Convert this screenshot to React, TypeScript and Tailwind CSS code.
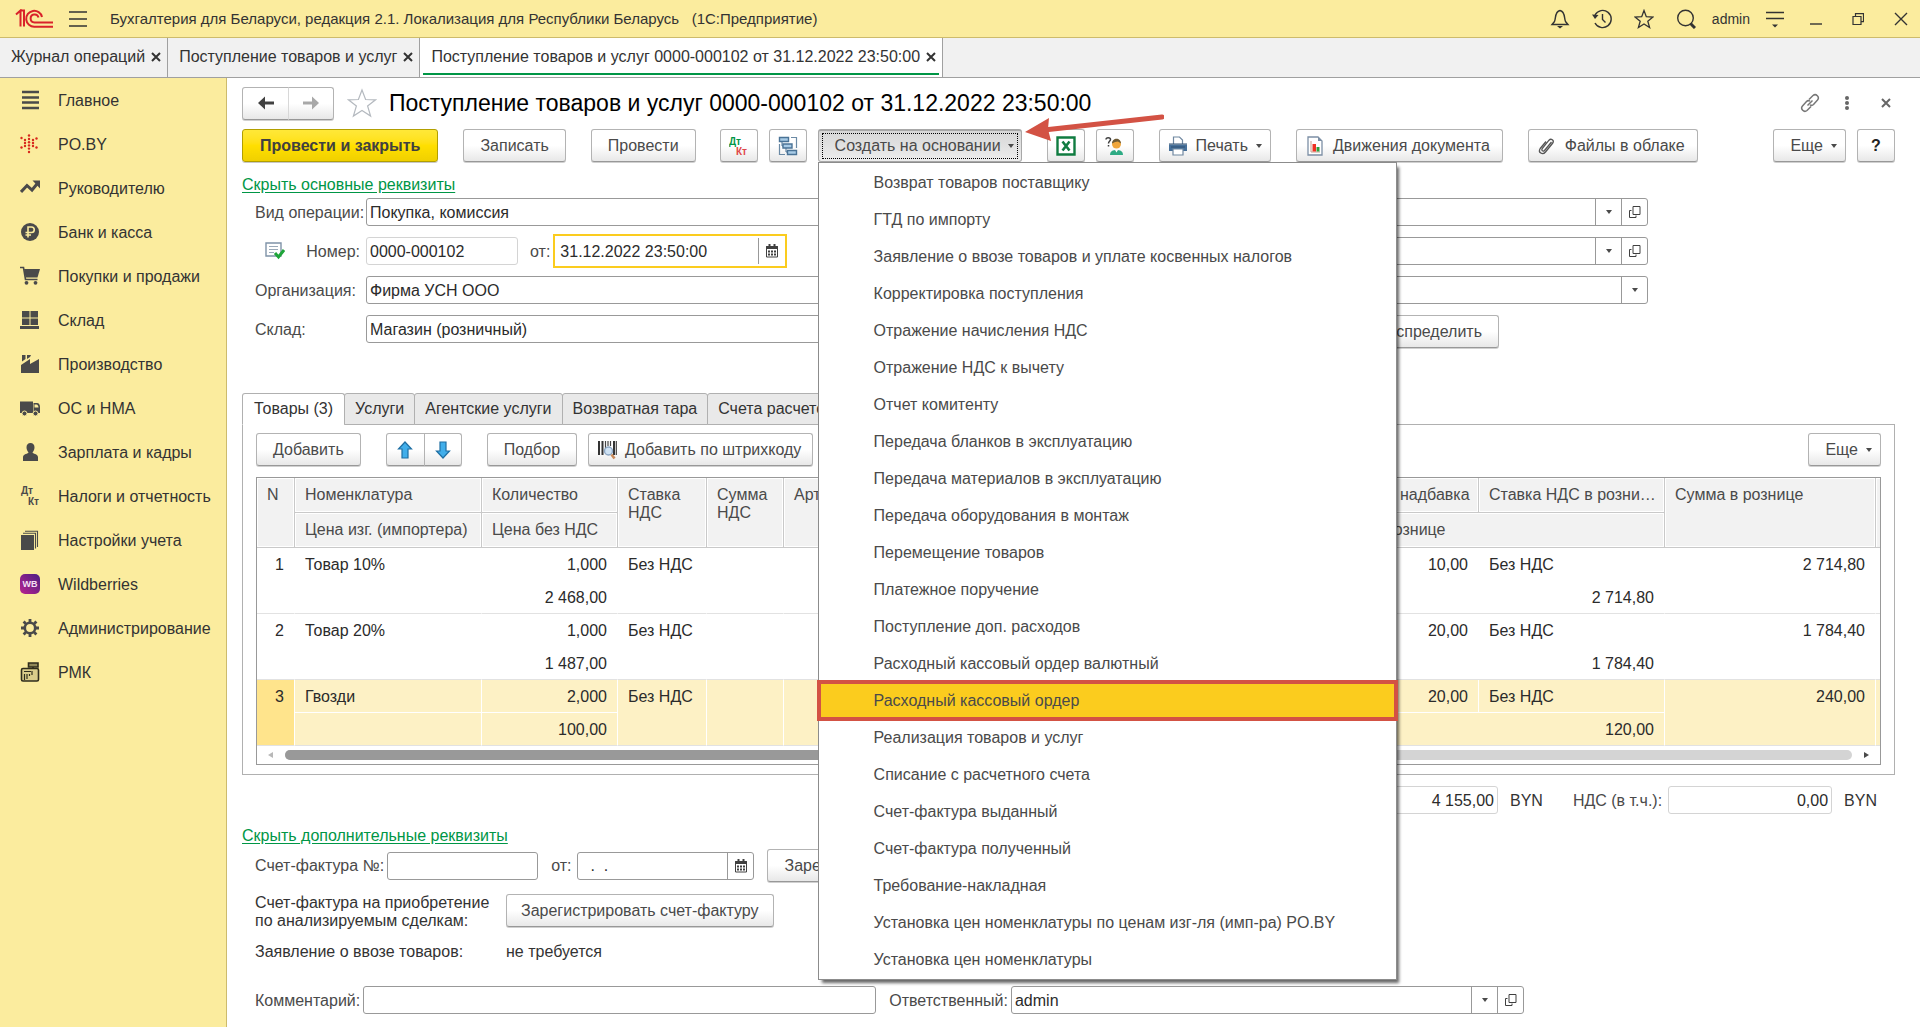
import React, { useState } from "react";
import clsx from "clsx";

const MENU_ITEMS = [
  "Возврат товаров поставщику",
  "ГТД по импорту",
  "Заявление о ввозе товаров и уплате косвенных налогов",
  "Корректировка поступления",
  "Отражение начисления НДС",
  "Отражение НДС к вычету",
  "Отчет комитенту",
  "Передача бланков в эксплуатацию",
  "Передача материалов в эксплуатацию",
  "Передача оборудования в монтаж",
  "Перемещение товаров",
  "Платежное поручение",
  "Поступление доп. расходов",
  "Расходный кассовый ордер валютный",
  "Расходный кассовый ордер",
  "Реализация товаров и услуг",
  "Списание с расчетного счета",
  "Счет-фактура выданный",
  "Счет-фактура полученный",
  "Требование-накладная",
  "Установка цен номенклатуры по ценам изг-ля (имп-ра) PO.BY",
  "Установка цен номенклатуры",
];

const ROWS = [
  { n: 1, name: "Товар 10%", qty: "1,000", price: "2 468,00", vat: "Без НДС", markup: "10,00", retail: "2 714,80", total: "2 714,80" },
  { n: 2, name: "Товар 20%", qty: "1,000", price: "1 487,00", vat: "Без НДС", markup: "20,00", retail: "1 784,40", total: "1 784,40" },
  { n: 3, name: "Гвозди", qty: "2,000", price: "100,00", vat: "Без НДС", markup: "20,00", retail: "120,00", total: "240,00" },
];

const OPEN_WINDOWS = [
  "Журнал операций",
  "Поступление товаров и услуг",
  "Поступление товаров и услуг 0000-000102 от 31.12.2022 23:50:00",
];

const DOC_TABS = ["Товары (3)", "Услуги", "Агентские услуги", "Возвратная тара", "Счета расчетов"];

/* ---------- icons ---------- */

const Svg: React.FC<{ size?: number; className?: string; children: React.ReactNode }> = ({
  size = 20,
  className,
  children,
}) => (
  <svg width={size} height={size} viewBox={`0 0 ${size} ${size}`} fill="none" className={clsx("shrink-0", className)} aria-hidden="true">
    {children}
  </svg>
);

const DARK = "#4a4a4a";

const DotsStar = () => (
  <Svg>
    {[
      [9, 1.5], [9, 5], [9, 8.2], [9, 11.4], [9, 14.600], [9, 18],
      [1.5, 4], [1.5, 13.5], [16.5, 4.500], [16.5, 13.5],
      [5, 6], [5, 9], [5, 12], [13, 6], [13, 9], [13, 12],
    ].map(([x, y]) => (
      <circle key={`${x}-${y}`} cx={x} cy={y} r="1.2" fill="#d8281c" />
    ))}
  </Svg>
);

const NAV_ITEMS: { label: string; icon: React.ReactNode }[] = [
  {
    label: "Главное",
    icon: <Svg><path d="M2 2h17M2 7.500h17M2 12.500h17M2 18h17" stroke={DARK} strokeWidth="2.600" /></Svg>,
  },
  { label: "PO.BY", icon: <DotsStar /> },
  {
    label: "Руководителю",
    icon: (
      <Svg>
        <path d="M1 14l6-6.500 5 4.500 5-6" stroke={DARK} strokeWidth="3" />
        <path d="M12.500 2.500H20v8z" fill={DARK} />
      </Svg>
    ),
  },
  {
    label: "Банк и касса",
    icon: (
      <Svg>
        <circle cx="10" cy="10" r="9" fill={DARK} />
        <path d="M8 15.500V5h3.500a2.700 2.700 0 0 1 0 5.500H5.500M5.500 13h5.500" stroke="#fbec9e" strokeWidth="1.600" />
      </Svg>
    ),
  },
  {
    label: "Покупки и продажи",
    icon: (
      <Svg>
        <path d="M0 1.500h3.500l2 12h12" stroke={DARK} strokeWidth="1.600" />
        <path d="M4 3h16l-2.500 8.500H5.500z" fill={DARK} />
        <circle cx="6.500" cy="16.800" r="1.900" fill={DARK} />
        <circle cx="15.500" cy="16.800" r="1.900" fill={DARK} />
      </Svg>
    ),
  },
  {
    label: "Склад",
    icon: (
      <Svg>
        <path d="M2 1h7.500v6.500H2zM10.500 1H18v6.500h-7.500zM2 8.500h7.500V15H2zM10.500 8.500H18V15h-7.500zM0 16h19v3H0z" fill={DARK} />
      </Svg>
    ),
  },
  {
    label: "Производство",
    icon: (
      <Svg>
        <path d="M1 19v-8l9-6v5l9-5v14z" fill={DARK} />
        <path d="M2 1h3.500v4L2 7.500zM7 1h4l-1 2-3 2z" fill={DARK} />
      </Svg>
    ),
  },
  {
    label: "ОС и НМА",
    icon: (
      <Svg>
        <path d="M0 3.500h13V15H0zM13.500 5h3.500c2 0 3 2 3 4v6h-6.500z" fill={DARK} />
        <path d="M14.500 6.500h2c1 0 2 1.500 2 3h-4z" fill="#fbec9e" />
        <circle cx="4.500" cy="15.500" r="2.500" fill={DARK} stroke="#fbec9e" />
        <circle cx="15.500" cy="15.500" r="2.500" fill={DARK} stroke="#fbec9e" />
      </Svg>
    ),
  },
  {
    label: "Зарплата и кадры",
    icon: (
      <Svg>
        <path d="M10.500 1c2.500 0 4 1.800 4 4.300 0 2.400-1 4.200-2 5 0 1.700 5.500 1.500 5.500 5V19H3v-3.700c0-3.500 5.500-3.300 5.500-5-1-.8-2-2.600-2-5C6.500 2.800 8 1 10.500 1z" fill={DARK} />
      </Svg>
    ),
  },
  {
    label: "Налоги и отчетность",
    icon: (
      <Svg>
        <text x="1" y="8" fontSize="10" fontWeight="700" fontFamily="Liberation Sans, sans-serif" fill={DARK}>Дт</text>
        <text x="8" y="19" fontSize="10" fontWeight="700" fontFamily="Liberation Sans, sans-serif" fill={DARK}>Кт</text>
      </Svg>
    ),
  },
  {
    label: "Настройки учета",
    icon: (
      <Svg>
        <path d="M1 5h13v15H1z" fill={DARK} />
        <path d="M3 3.200h12.500V18.500M5 1.200h12.500V17" stroke={DARK} strokeWidth="1.100" />
      </Svg>
    ),
  },
  {
    label: "Wildberries",
    icon: (
      <Svg>
        <defs>
          <linearGradient id="wb" x1="0" y1="1" x2="1" y2="0">
            <stop offset="0" stopColor="#b8238f" />
            <stop offset="1" stopColor="#4b1f84" />
          </linearGradient>
        </defs>
        <rect width="20" height="20" rx="5" fill="url(#wb)" />
        <text x="10" y="13" fontSize="9" fontWeight="700" textAnchor="middle" fontFamily="Liberation Sans, sans-serif" fill="#f3dff2">WB</text>
      </Svg>
    ),
  },
  {
    label: "Администрирование",
    icon: (
      <Svg>
        <circle cx="10" cy="10" r="5.200" stroke={DARK} strokeWidth="2.600" />
        <path d="M10 1v3.500M10 15.500V19M1 10h3.500M15.500 10H19M3.600 3.600l2.400 2.400M14 14l2.400 2.400M3.600 16.400L6 14M14 6l2.400-2.400" stroke={DARK} strokeWidth="2.800" />
      </Svg>
    ),
  },
  {
    label: "РМК",
    icon: (
      <Svg>
        <path d="M8.500 1H18v4H8.500zM13 5v2" fill="#8f8758" stroke="#2f2d1c" strokeWidth="1.600" />
        <rect x="1.500" y="6.500" width="17" height="12.500" rx="1.500" fill="#d9cc8a" stroke="#2f2d1c" strokeWidth="1.600" />
        <path d="M4 9.500h7M4.500 12v6M7 12v5M9.500 12v2M12 9v4" stroke="#2f2d1c" strokeWidth="1.200" />
      </Svg>
    ),
  },
];

const CalendarIcon = () => (
  <Svg size={14}>
    <path d="M1.500 2.500h11V13h-11z" stroke="#404040" />
    <path d="M1.500 2.500h11v2h-11z" fill="#404040" stroke="#404040" />
    <path d="M4.500 0v3M9.500 0v3" stroke="#404040" strokeWidth="2" />
    <path d="M3 7.500h8M3 10.500h8" stroke="#404040" strokeWidth="2" strokeDasharray="2 1" />
  </Svg>
);

const OpenIcon = () => (
  <Svg size={14}>
    <path d="M5 1.500h7v8H5zM3.500 5.500h-2v7h6.500v-2" stroke="#404040" />
  </Svg>
);

const Caret = () => (
  <svg width="6" height="4" viewBox="0 0 6 4" className="shrink-0" aria-hidden="true">
    <path d="M0 0h6L3 4z" fill="#4a4a4a" />
  </svg>
);

const CrossIcon = ({ size = 10 }: { size?: number }) => (
  <svg width={size} height={size} viewBox="0 0 10 10" aria-hidden="true">
    <path d="M1 1l8 8M9 1L1 9" stroke="currentColor" strokeWidth="2" />
  </svg>
);

/* ---------- controls ---------- */

type BtnProps = React.ButtonHTMLAttributes<HTMLButtonElement>;

const Btn: React.FC<BtnProps> = ({ className, children, ...rest }) => (
  <button
    type="button"
    className={clsx(
      "flex h-[33px] shrink-0 items-center justify-center whitespace-nowrap rounded-[3px] border border-[#b3b3b3] border-b-[#989898] bg-linear-to-b from-white from-50% to-[#e8e8e8] shadow-[0_1px_0_#d0d0d0]",
      className
    )}
    {...rest}
  >
    {children}
  </button>
);

const MoreBtn = () => (
  <Btn className="gap-2 pl-4 pr-2">
    Еще <Caret />
  </Btn>
);

interface FieldProps {
  id?: string;
  label?: string;
  value?: string;
  pale?: boolean;
  right?: boolean;
  actions?: ("drop" | "open" | "date")[];
  className?: string;
}

const ACTION_LABELS = { drop: "Выбрать из списка", open: "Открыть", date: "Календарь" };

const Field: React.FC<FieldProps> = ({ id, label, value = "", pale, right, actions = [], className }) => (
  <div
    className={clsx(
      "flex h-7 overflow-hidden rounded-[3px] border bg-white",
      pale ? "border-[#d4d4d4]" : "border-[#999]",
      className
    )}
  >
    <input
      id={id}
      aria-label={label}
      defaultValue={value}
      className={clsx("w-full min-w-0 flex-1 bg-transparent px-[3px] pt-px text-[#2b2b2b] outline-none", right && "text-right")}
    />
    {actions.map((a) => (
      <button key={a} type="button" aria-label={ACTION_LABELS[a]} className="flex w-[26px] shrink-0 items-center justify-center border-l border-[#999]">
        {a === "drop" && <Caret />}
        {a === "open" && <OpenIcon />}
        {a === "date" && <CalendarIcon />}
      </button>
    ))}
  </div>
);

/* ---------- page parts ---------- */

const TitleBar = () => (
  <header className="flex h-[38px] items-center border-b border-[#cdbb6c] bg-[#fbec9e] pl-[15px] pr-3 text-[#333]">
    <svg width="38" height="20" viewBox="0 0 38 20" fill="none" aria-hidden="true">
      <path d="M1 5.500L5.500 1.500V17.500M9 17.500V1.500H5.500" stroke="#d9222a" strokeWidth="2" />
      <path d="M27 8a8 8 0 1 0-7.500 9.800H38" stroke="#d9222a" strokeWidth="2" />
      <path d="M23.500 8.500a4 4 0 1 0-4 5H38" stroke="#d9222a" strokeWidth="2" />
    </svg>
    <button type="button" aria-label="Меню" className="ml-4">
      <Svg size={18}><path d="M0 2h18M0 9h18M0 16h18" stroke="#333" strokeWidth="1.600" /></Svg>
    </button>
    <div className="ml-[23px] whitespace-pre text-[15px]">
      Бухгалтерия для Беларуси, редакция 2.1. Локализация для Республики Беларусь   (1С:Предприятие)
    </div>
    <div className="ml-auto flex items-center">
      <button type="button" aria-label="Уведомления" className="mr-[22px]">
        <Svg><path d="M10 1.500c-5.500 1-4 8-5.500 11L2 15.500h16l-2.500-3c-1.500-3 0-10-5.500-11z" stroke="#333" strokeWidth="1.400" /><path d="M7 17h6l-3 2.500z" fill="#333" /></Svg>
      </button>
      <button type="button" aria-label="История" className="mr-[22px]">
        <Svg><path d="M3 6a8.600 8.600 0 1 1 0 8M10.500 5v5.500l3 3" stroke="#333" strokeWidth="1.400" /><path d="M0 5.500l6.500.5-3.500 4z" fill="#333" /></Svg>
      </button>
      <button type="button" aria-label="Избранное" className="mr-[22px]">
        <Svg><path d="M10 1.500l2.300 6.200 6.700.3-5.200 4.200 1.800 6.300L10 15l-5.600 3.500 1.800-6.300L1 8l6.700-.3z" stroke="#333" strokeWidth="1.300" /></Svg>
      </button>
      <button type="button" aria-label="Поиск" className="mr-4">
        <Svg><circle cx="9.500" cy="9" r="7.800" stroke="#333" strokeWidth="1.400" /><path d="M14.500 14.500l4.500 4.500" stroke="#333" strokeWidth="3" /></Svg>
      </button>
      <span className="mr-4 text-sm">admin</span>
      <button type="button" aria-label="Настройки" className="mr-[26px]">
        <Svg size={18}><path d="M0 2.500h18M0 8.500h18" stroke="#333" strokeWidth="1.300" /><path d="M6 14.500h6l-3 3z" fill="#333" /></Svg>
      </button>
      <button type="button" aria-label="Свернуть" className="mr-[30px]">
        <Svg size={12}><path d="M0 11h12" stroke="#333" strokeWidth="1.400" /></Svg>
      </button>
      <button type="button" aria-label="Восстановить" className="mr-[30px]">
        <Svg size={12}><path d="M1 3.500h8v8H1zM3.500 3V.7h8v8H9.500" stroke="#333" strokeWidth="1.200" /></Svg>
      </button>
      <button type="button" aria-label="Закрыть программу">
        <Svg size={14}><path d="M1 1l12 12M13 1L1 13" stroke="#333" strokeWidth="1.400" /></Svg>
      </button>
    </div>
  </header>
);

const WindowTabs = () => (
  <nav className="flex h-10 border-b border-[#a0a0a0] bg-[#f1f1f1] text-[#333]">
    {OPEN_WINDOWS.map((title, i) => {
      const active = i === OPEN_WINDOWS.length - 1;
      return (
        <div key={title} className={clsx("flex flex-col border-r border-[#a0a0a0] px-[3px]", active && "bg-white")}>
          <div className="flex flex-1 items-center gap-[6px] pl-2 pr-[3px]">
            <a href="#" className="whitespace-nowrap">{title}</a>
            <button type="button" aria-label="Закрыть вкладку"><CrossIcon /></button>
          </div>
          <div className={clsx("-mt-[3px] mb-[2px] h-[2px]", active && "bg-[#009646]")} />
        </div>
      );
    })}
  </nav>
);

const Sidebar = () => (
  <aside className="w-[227px] shrink-0 border-r border-[#cdbb6c] bg-[#fbec9e]">
    {NAV_ITEMS.map((item) => (
      <a key={item.label} href="#" className="flex h-11 items-center gap-[18px] pl-5 text-[#333]">
        {item.icon}
        <span className="whitespace-nowrap pt-[2px]">{item.label}</span>
      </a>
    ))}
  </aside>
);

const CreateMenu = () => {
  const [open, setOpen] = useState(true);
  return (
    <div className="relative shrink-0">
      <button
        type="button"
        onClick={() => setOpen(!open)}
        className="flex h-[33px] items-center rounded-[3px] border border-t-2 border-[#a8a8a8] bg-linear-to-b from-[#d6d6d6] to-[#ededed] px-[3px]"
      >
        <span className="flex h-[26px] items-center gap-[7px] whitespace-nowrap border border-dotted border-black pl-3 pr-[3px]">
          Создать на основании <Caret />
        </span>
      </button>
      {open && (
        <div className="absolute left-0 top-full z-20 w-[579px] border border-[#8c8c8c] bg-white py-px shadow-[3px_4px_3px_-1px_rgba(0,0,0,0.6)]">
          {MENU_ITEMS.map((item) => {
            const marked = item === "Расходный кассовый ордер";
            return (
              <button
                key={item}
                type="button"
                className={clsx(
                  "flex h-[37px] w-full items-center whitespace-nowrap pl-[55px]",
                  marked && "bg-[#fbcc1e] outline-4 -outline-offset-2 outline-[#d35244]"
                )}
              >
                {item}
              </button>
            );
          })}
        </div>
      )}
      <svg width="140" height="34" viewBox="0 0 140 34" className="absolute -top-4 left-full z-30 ml-[2px]" aria-hidden="true">
        <path d="M138 4L20 17" stroke="#d35244" strokeWidth="5" strokeLinecap="round" />
        <path d="M1 19L25 5l-1 11 3 12z" fill="#d35244" />
      </svg>
    </div>
  );
};

const CommandBar = () => (
  <div className="mt-[11px] flex items-center text-[#4a4a4a]">
    <button
      type="button"
      className="flex h-[33px] shrink-0 items-center whitespace-nowrap rounded-[3px] border border-[#b29f00] bg-linear-to-b from-[#ffe838] via-[#ffdf00] to-[#f0d000] px-[17px] font-bold text-[#404040] shadow-[0_1px_0_#c8c8c8]"
    >
      Провести и закрыть
    </button>
    <Btn className="ml-[25px] px-4">Записать</Btn>
    <Btn className="ml-[25px] px-4">Провести</Btn>
    <Btn className="ml-6 w-[38px]" aria-label="Проводки">
      <Svg>
        <text x="0" y="9" fontSize="10" fontWeight="700" fontFamily="Liberation Sans, sans-serif" fill="#009646">Дт</text>
        <text x="7" y="19" fontSize="10" fontWeight="700" fontFamily="Liberation Sans, sans-serif" fill="#e04848">Кт</text>
      </Svg>
    </Btn>
    <Btn className="ml-[11px] w-[38px]" aria-label="Структура подчиненности">
      <Svg>
        <path d="M13 1.500h5.500V12M7 18.500H1.500V8" stroke="#6b8aa5" strokeWidth="1.200" />
        <path d="M1.500 1.500h9v4h-9zM5 8h9v4H5zM9.500 14.500h9v4h-9z" fill="#a8cbe6" stroke="#4a7396" strokeWidth="1.400" />
        <path d="M4 6v4h1M8 12v4h1.500" stroke="#4a7396" />
      </Svg>
    </Btn>
    <div className="ml-[11px]">
      <CreateMenu />
    </div>
    <Btn className="ml-[25px] w-[38px]" aria-label="Excel">
      <Svg>
        <path d="M1.500 1.500h17v17h-17z" fill="#fff" stroke="#107c41" strokeWidth="2.400" />
        <path d="M6.500 5.500l7 9M13.500 5.500l-7 9" stroke="#107c41" strokeWidth="2.600" />
      </Svg>
    </Btn>
    <Btn className="ml-[11px] w-[38px]" aria-label="Вопрос специалисту">
      <Svg>
        <path d="M1 3.500C1 1 5.500 1 5.500 3.500 5.500 5 3.500 5 3.500 7.500M3.500 9v1.600" stroke="#404040" strokeWidth="1.500" />
        <path d="M5 19c0-4 3-5 6.500-5s6.500 1 6.500 5z" fill="#2eab84" />
        <circle cx="11.500" cy="8" r="4.500" fill="#f0a63c" />
        <path d="M7 7.500C7 1 16 1 16 7.500l-3-2-3 .5z" fill="#6d5a35" />
        <path d="M10 14h3l-1.500 2.500z" fill="#fff" />
      </Svg>
    </Btn>
    <Btn className="ml-[25px] gap-2 pl-2 pr-2">
      <Svg>
        <path d="M5.500 8V1h6l3 3v4" fill="#fff" stroke="#6f87a0" strokeWidth="1.200" />
        <path d="M1 8.500h18v6.500H1z" fill="#46709a" />
        <path d="M1 8h18M3 11h14" stroke="#2f4f70" strokeWidth="1.200" />
        <path d="M5 13h10v6H5z" fill="#fff" stroke="#6f87a0" strokeWidth="1.200" />
      </Svg>
      Печать <Caret />
    </Btn>
    <Btn className="ml-[25px] gap-2 pl-2 pr-3">
      <Svg>
        <path d="M3 1h10l4 4v14H3z" fill="#fff" stroke="#7c8fa5" strokeWidth="1.300" />
        <path d="M13 1v4h4z" fill="#7c8fa5" />
        <path d="M6 5v11h9" stroke="#c4a090" />
        <path d="M7.500 8H11v7.500H7.500z" fill="#ee3324" />
        <path d="M11.500 11h3v4.500h-3z" fill="#2e9e3c" />
      </Svg>
      Движения документа
    </Btn>
    <Btn className="ml-[25px] gap-2 pl-2 pr-3">
      <Svg>
        <path d="M14.500 6l-7 8.500c-1.500 1.500-3.500 0-2.300-1.800l6.800-8.500c2-2.200 5.500 0 3.800 2.800L8.500 16c-3 3.500-7.800.5-5.300-3.500L9 5.500" stroke="#555" strokeWidth="1.300" />
      </Svg>
      Файлы в облаке
    </Btn>
    <div className="ml-auto flex gap-[11px]">
      <MoreBtn />
      <Btn className="w-[38px] font-bold text-[#222]">?</Btn>
    </div>
  </div>
);

const MainFields = () => (
  <div className="mt-[3px] grid grid-cols-2 gap-x-[25px] pl-[13px] pr-[247px] text-[#4a4a4a]">
    <div className="flex flex-col gap-[11px]">
      <div className="flex items-center">
        <label htmlFor="operation" className="w-[111px] shrink-0 pt-px">Вид операции:</label>
        <Field id="operation" value="Покупка, комиссия" actions={["drop"]} className="flex-1" />
      </div>
      <div className="flex h-7 items-center">
        <Svg className="ml-[10px]">
          <path d="M1 2h15v13H1z" fill="#fff" stroke="#7f93a8" strokeWidth="1.400" />
          <path d="M4 5.500h9M4 8.500h9M4 11.500h5" stroke="#9aa9b8" />
          <path d="M10 12l3.500 4L19 9" stroke="#1fa53a" strokeWidth="3" />
        </Svg>
        <label htmlFor="number" className="ml-auto mr-[6px] pt-px">Номер:</label>
        <div className="flex w-[calc(100%-111px)] items-center">
          <Field id="number" value="0000-000102" pale className="w-[152px]" />
          <label htmlFor="date" className="ml-3 mr-[3px] pt-px">от:</label>
          <div className="flex h-[34px] w-[234px] border-2 border-[#fbcc1e] py-[2px]">
            <input id="date" defaultValue="31.12.2022 23:50:00" className="min-w-0 flex-1 pl-[5px] pt-px text-[#2b2b2b] outline-none" />
            <button type="button" aria-label="Календарь" className="flex w-[27px] items-center justify-center border-l border-[#999]">
              <CalendarIcon />
            </button>
          </div>
        </div>
      </div>
      <div className="flex items-center">
        <label htmlFor="company" className="w-[111px] shrink-0 pt-px">Организация:</label>
        <Field id="company" value="Фирма УСН ООО" actions={["drop", "open"]} className="flex-1" />
      </div>
      <div className="flex items-center">
        <label htmlFor="store" className="w-[111px] shrink-0 pt-px">Склад:</label>
        <Field id="store" value="Магазин (розничный)" actions={["drop", "open"]} className="flex-1" />
      </div>
    </div>
    <div className="flex flex-col gap-[11px]">
      <Field label="Контрагент" actions={["drop", "open"]} />
      <Field label="Договор" actions={["drop", "open"]} />
      <Field label="Зачет аванса" actions={["drop"]} />
      <Btn className="mr-[149px] self-end px-4">Распределить</Btn>
    </div>
  </div>
);

const Th: React.FC<React.ThHTMLAttributes<HTMLTableCellElement>> = ({ className, ...rest }) => (
  <th
    className={clsx(
      "h-[35px] overflow-hidden border-b border-r border-[#c9c9c9] bg-[#f2f2f2] pl-[10px] pt-2 text-left align-top font-normal leading-[18px] text-[#4a4a4a] shadow-[inset_0_0_0_1px_#fff]",
      className
    )}
    {...rest}
  />
);

const GoodsTable = () => (
  <div className="mt-[11px] border border-[#999]">
    <table className="w-full table-fixed border-separate border-spacing-0">
      <colgroup>
        <col className="w-[38px]" />
        <col className="w-[187px]" />
        <col className="w-[136px]" />
        <col className="w-[89px]" />
        <col className="w-[77px]" />
        <col />
        <col className="w-[160px]" />
        <col className="w-[186px]" />
        <col className="w-[211px]" />
        <col className="w-[4px]" />
      </colgroup>
      <thead>
        <tr>
          <Th rowSpan={2}>N</Th>
          <Th>Номенклатура</Th>
          <Th>Количество</Th>
          <Th rowSpan={2}>Ставка НДС</Th>
          <Th rowSpan={2}>Сумма НДС</Th>
          <Th rowSpan={2}>Артикул</Th>
          <Th className="whitespace-nowrap">Торговая надбавка</Th>
          <Th className="text-ellipsis whitespace-nowrap pr-1">Ставка НДС в розничной цене</Th>
          <Th rowSpan={2}>Сумма в рознице</Th>
          <th rowSpan={2} className="border-b border-[#c9c9c9] bg-[#f2f2f2] shadow-[inset_1px_1px_0_#fff]" />
        </tr>
        <tr>
          <Th>Цена изг. (импортера)</Th>
          <Th>Цена без НДС</Th>
          <Th colSpan={2}>Цена в рознице</Th>
        </tr>
      </thead>
      {ROWS.map((r) => {
        const selected = r.n === 3;
        const base = "h-[33px] whitespace-nowrap px-[10px] pt-2 align-top leading-[18px] border-r";
        const inner = clsx(base, selected ? "border-b border-white bg-[#fdf1c5]" : "border-transparent");
        const edge = clsx(base, "border-b border-b-[#e2e2e2]", selected ? "border-r-white" : "border-r-transparent");
        const last = clsx(edge, selected && "bg-[#fdf1c5]");
        return (
          <tbody key={r.n} className="text-[#2b2b2b]">
            <tr>
              <td rowSpan={2} className={clsx(edge, "text-right", selected && "bg-[#ffe48c]")}>{r.n}</td>
              <td className={inner}>{r.name}</td>
              <td className={clsx(inner, "text-right")}>{r.qty}</td>
              <td rowSpan={2} className={last}>{r.vat}</td>
              <td rowSpan={2} className={last} />
              <td rowSpan={2} className={last} />
              <td className={clsx(inner, "text-right")}>{r.markup}</td>
              <td className={inner}>{r.vat}</td>
              <td rowSpan={2} className={clsx(last, "text-right")}>{r.total}</td>
              <td rowSpan={2} className={clsx("border-b border-[#e2e2e2]", selected && "bg-[#fdf1c5]")} />
            </tr>
            <tr>
              <td className={last} />
              <td className={clsx(last, "text-right")}>{r.price}</td>
              <td colSpan={2} className={clsx(last, "text-right")}>{r.retail}</td>
            </tr>
          </tbody>
        );
      })}
    </table>
    <div className="flex h-[18px] items-center px-[11px]">
      <svg width="5" height="6" viewBox="0 0 5 6" aria-hidden="true"><path d="M5 0v6L0 3z" fill="#b8b8b8" /></svg>
      <div className="mx-3 h-[10px] flex-1 rounded-full bg-[#d4d4d4]">
        <div className="h-full w-3/5 rounded-full bg-[#999]" />
      </div>
      <svg width="5" height="6" viewBox="0 0 5 6" aria-hidden="true"><path d="M0 0v6l5-3z" fill="#4a4a4a" /></svg>
    </div>
  </div>
);

const DocumentTabs = () => (
  <section className="mt-[45px]">
    <div className="relative flex" role="tablist">
      {DOC_TABS.map((t, i) => (
        <button
          key={t}
          type="button"
          role="tab"
          aria-selected={i === 0}
          className={clsx(
            "h-8 whitespace-nowrap rounded-t-[3px] border border-[#b0b0b0] text-[#333]",
            i === 0 ? "border-b-white bg-white px-[11px]" : "-ml-px bg-[#e9e9e9] px-[10px]"
          )}
        >
          {t}
        </button>
      ))}
    </div>
    <div className="-mt-px border border-[#b0b0b0] px-[13px] pb-[9px] pt-2">
      <div className="flex items-center text-[#4a4a4a]">
        <Btn className="px-4">Добавить</Btn>
        <div className="ml-[25px] flex">
          <Btn className="w-[39px] rounded-r-none" aria-label="Переместить вверх">
            <Svg><path d="M10 2l6.500 7H13v9H7V9H3.500z" fill="#41aeea" stroke="#1f6fa3" strokeWidth="1.200" /></Svg>
          </Btn>
          <Btn className="-ml-px w-[38px] rounded-l-none" aria-label="Переместить вниз">
            <Svg><path d="M10 18l6.500-7H13V2H7v9H3.500z" fill="#41aeea" stroke="#1f6fa3" strokeWidth="1.200" /></Svg>
          </Btn>
        </div>
        <Btn className="ml-[25px] px-4">Подбор</Btn>
        <Btn className="ml-[11px] gap-2 pl-2 pr-[11px]">
          <Svg>
            <path d="M2 1v14M5.500 1v14M17 1v14" stroke="#333" strokeWidth="2" />
            <path d="M8.500 1v9M11 1v5M13.500 1v5M19.300 1v14" stroke="#444" strokeWidth="1.200" />
            <circle cx="11.500" cy="11" r="4" fill="#cfe3f5" stroke="#8da7c4" strokeWidth="1.400" />
            <path d="M14.500 14.500l3 4" stroke="#c98b5c" strokeWidth="2.600" />
          </Svg>
          Добавить по штрихкоду
        </Btn>
        <div className="ml-auto"><MoreBtn /></div>
      </div>
      <GoodsTable />
    </div>
  </section>
);

const Totals = () => (
  <div className="mt-[11px] flex items-center justify-end pr-[18px] text-[#333]">
    <Field label="Всего" value="4 155,00" pale right className="w-[164px]" />
    <span className="ml-3 pt-px">BYN</span>
    <label htmlFor="vat" className="ml-[30px] mr-[6px] pt-px text-[#4a4a4a]">НДС (в т.ч.):</label>
    <Field id="vat" value="0,00" pale right className="w-[164px]" />
    <span className="ml-3 pt-px">BYN</span>
  </div>
);

const Footer = () => (
  <div className="pl-[13px] text-[#4a4a4a]">
    <div className="mt-[3px] flex items-center">
      <label htmlFor="invoice" className="mr-[3px] pt-px">Счет-фактура №:</label>
      <Field id="invoice" className="w-[151px]" />
      <label htmlFor="invoiceDate" className="ml-[13px] mr-[6px] pt-px">от:</label>
      <Field id="invoiceDate" value="  .  ." actions={["date"]} className="w-[177px]" />
      <Btn className="ml-[13px] px-4">Зарегистрировать</Btn>
    </div>
    <div className="mt-3 grid grid-cols-[251px_1fr] items-start gap-y-3 text-[#333]">
      <div className="leading-[18px]">
        Счет-фактура на приобретение<br />по анализируемым сделкам:
      </div>
      <div className="flex text-[#4a4a4a]">
        <Btn className="px-[14px]">Зарегистрировать счет-фактуру</Btn>
      </div>
      <div className="leading-5">Заявление о ввозе товаров:</div>
      <div className="leading-5">не требуется</div>
    </div>
    <div className="mt-6 flex items-center pr-[371px]">
      <label htmlFor="comment" className="mr-[3px] pt-px">Комментарий:</label>
      <Field id="comment" className="flex-1" />
      <label htmlFor="owner" className="ml-[13px] mr-[3px] pt-px">Ответственный:</label>
      <Field id="owner" value="admin" actions={["drop", "open"]} className="flex-1" />
    </div>
  </div>
);

const App: React.FC = () => (
  <div className="flex min-h-screen flex-col bg-white font-['Liberation_Sans',Arial,sans-serif] text-base leading-5">
    <TitleBar />
    <WindowTabs />
    <div className="flex flex-1">
      <Sidebar />
      <main className="min-w-0 flex-1 pb-3 pl-[15px] pr-[25px] pt-[10px]">
        <div className="flex h-[30px] items-center">
          <div className="flex">
            <Btn className="h-[30px] w-[47px] rounded-r-none" aria-label="Назад">
              <Svg size={18}><path d="M17 9H5" stroke="#404040" strokeWidth="3" /><path d="M8 2.500L1 9l7 6.500z" fill="#404040" /></Svg>
            </Btn>
            <Btn className="-ml-px h-[30px] w-[46px] rounded-l-none border-l-[#d8d8d8]" aria-label="Вперед">
              <Svg size={18}><path d="M1 9h12" stroke="#a8a8a8" strokeWidth="3" /><path d="M10 2.500L17 9l-7 6.500z" fill="#a8a8a8" /></Svg>
            </Btn>
          </div>
          <button type="button" aria-label="Добавить в избранное" className="ml-[13px]">
            <Svg size={30}><path d="M15 2l3.600 9.500 10 .3-8 6.200 3 10L15 22.500 6.400 28l3-10-8-6.200 10-.3z" stroke="#b4b9bf" strokeWidth="1.200" /></Svg>
          </button>
          <h1 className="ml-3 whitespace-nowrap text-[23px] leading-7 text-black">
            Поступление товаров и услуг 0000-000102 от 31.12.2022 23:50:00
          </h1>
          <div className="ml-auto flex items-center pr-1 text-[#666]">
            <button type="button" aria-label="Получить ссылку">
              <Svg>
                <path d="M9 6.500l4-4c3-2.500 7 1.500 4.500 4.500l-4 4.500c-1 1-2.500 1-3.500.3M11 13.500l-4 4c-3 2.500-7-1.500-4.500-4.500l4-4.500c1-1 2.500-1 3.500-.3M7.500 12.500l5-5" stroke="#777" strokeWidth="1.500" />
              </Svg>
            </button>
            <button type="button" aria-label="Ещё действия" className="ml-[25px]">
              <svg width="4" height="14" viewBox="0 0 4 14" aria-hidden="true">
                <circle cx="2" cy="2" r="2" fill="#666" /><circle cx="2" cy="7" r="2" fill="#666" /><circle cx="2" cy="12" r="2" fill="#666" />
              </svg>
            </button>
            <button type="button" aria-label="Закрыть документ" className="ml-8">
              <CrossIcon />
            </button>
          </div>
        </div>
        <CommandBar />
        <div className="mt-[13px] text-[#009646]">
          <a href="#" className="underline underline-offset-2">Скрыть основные реквизиты</a>
        </div>
        <MainFields />
        <DocumentTabs />
        <Totals />
        <div className="mt-3 text-[#009646]">
          <a href="#" className="underline underline-offset-2">Скрыть дополнительные реквизиты</a>
        </div>
        <Footer />
      </main>
    </div>
  </div>
);

export default App;
